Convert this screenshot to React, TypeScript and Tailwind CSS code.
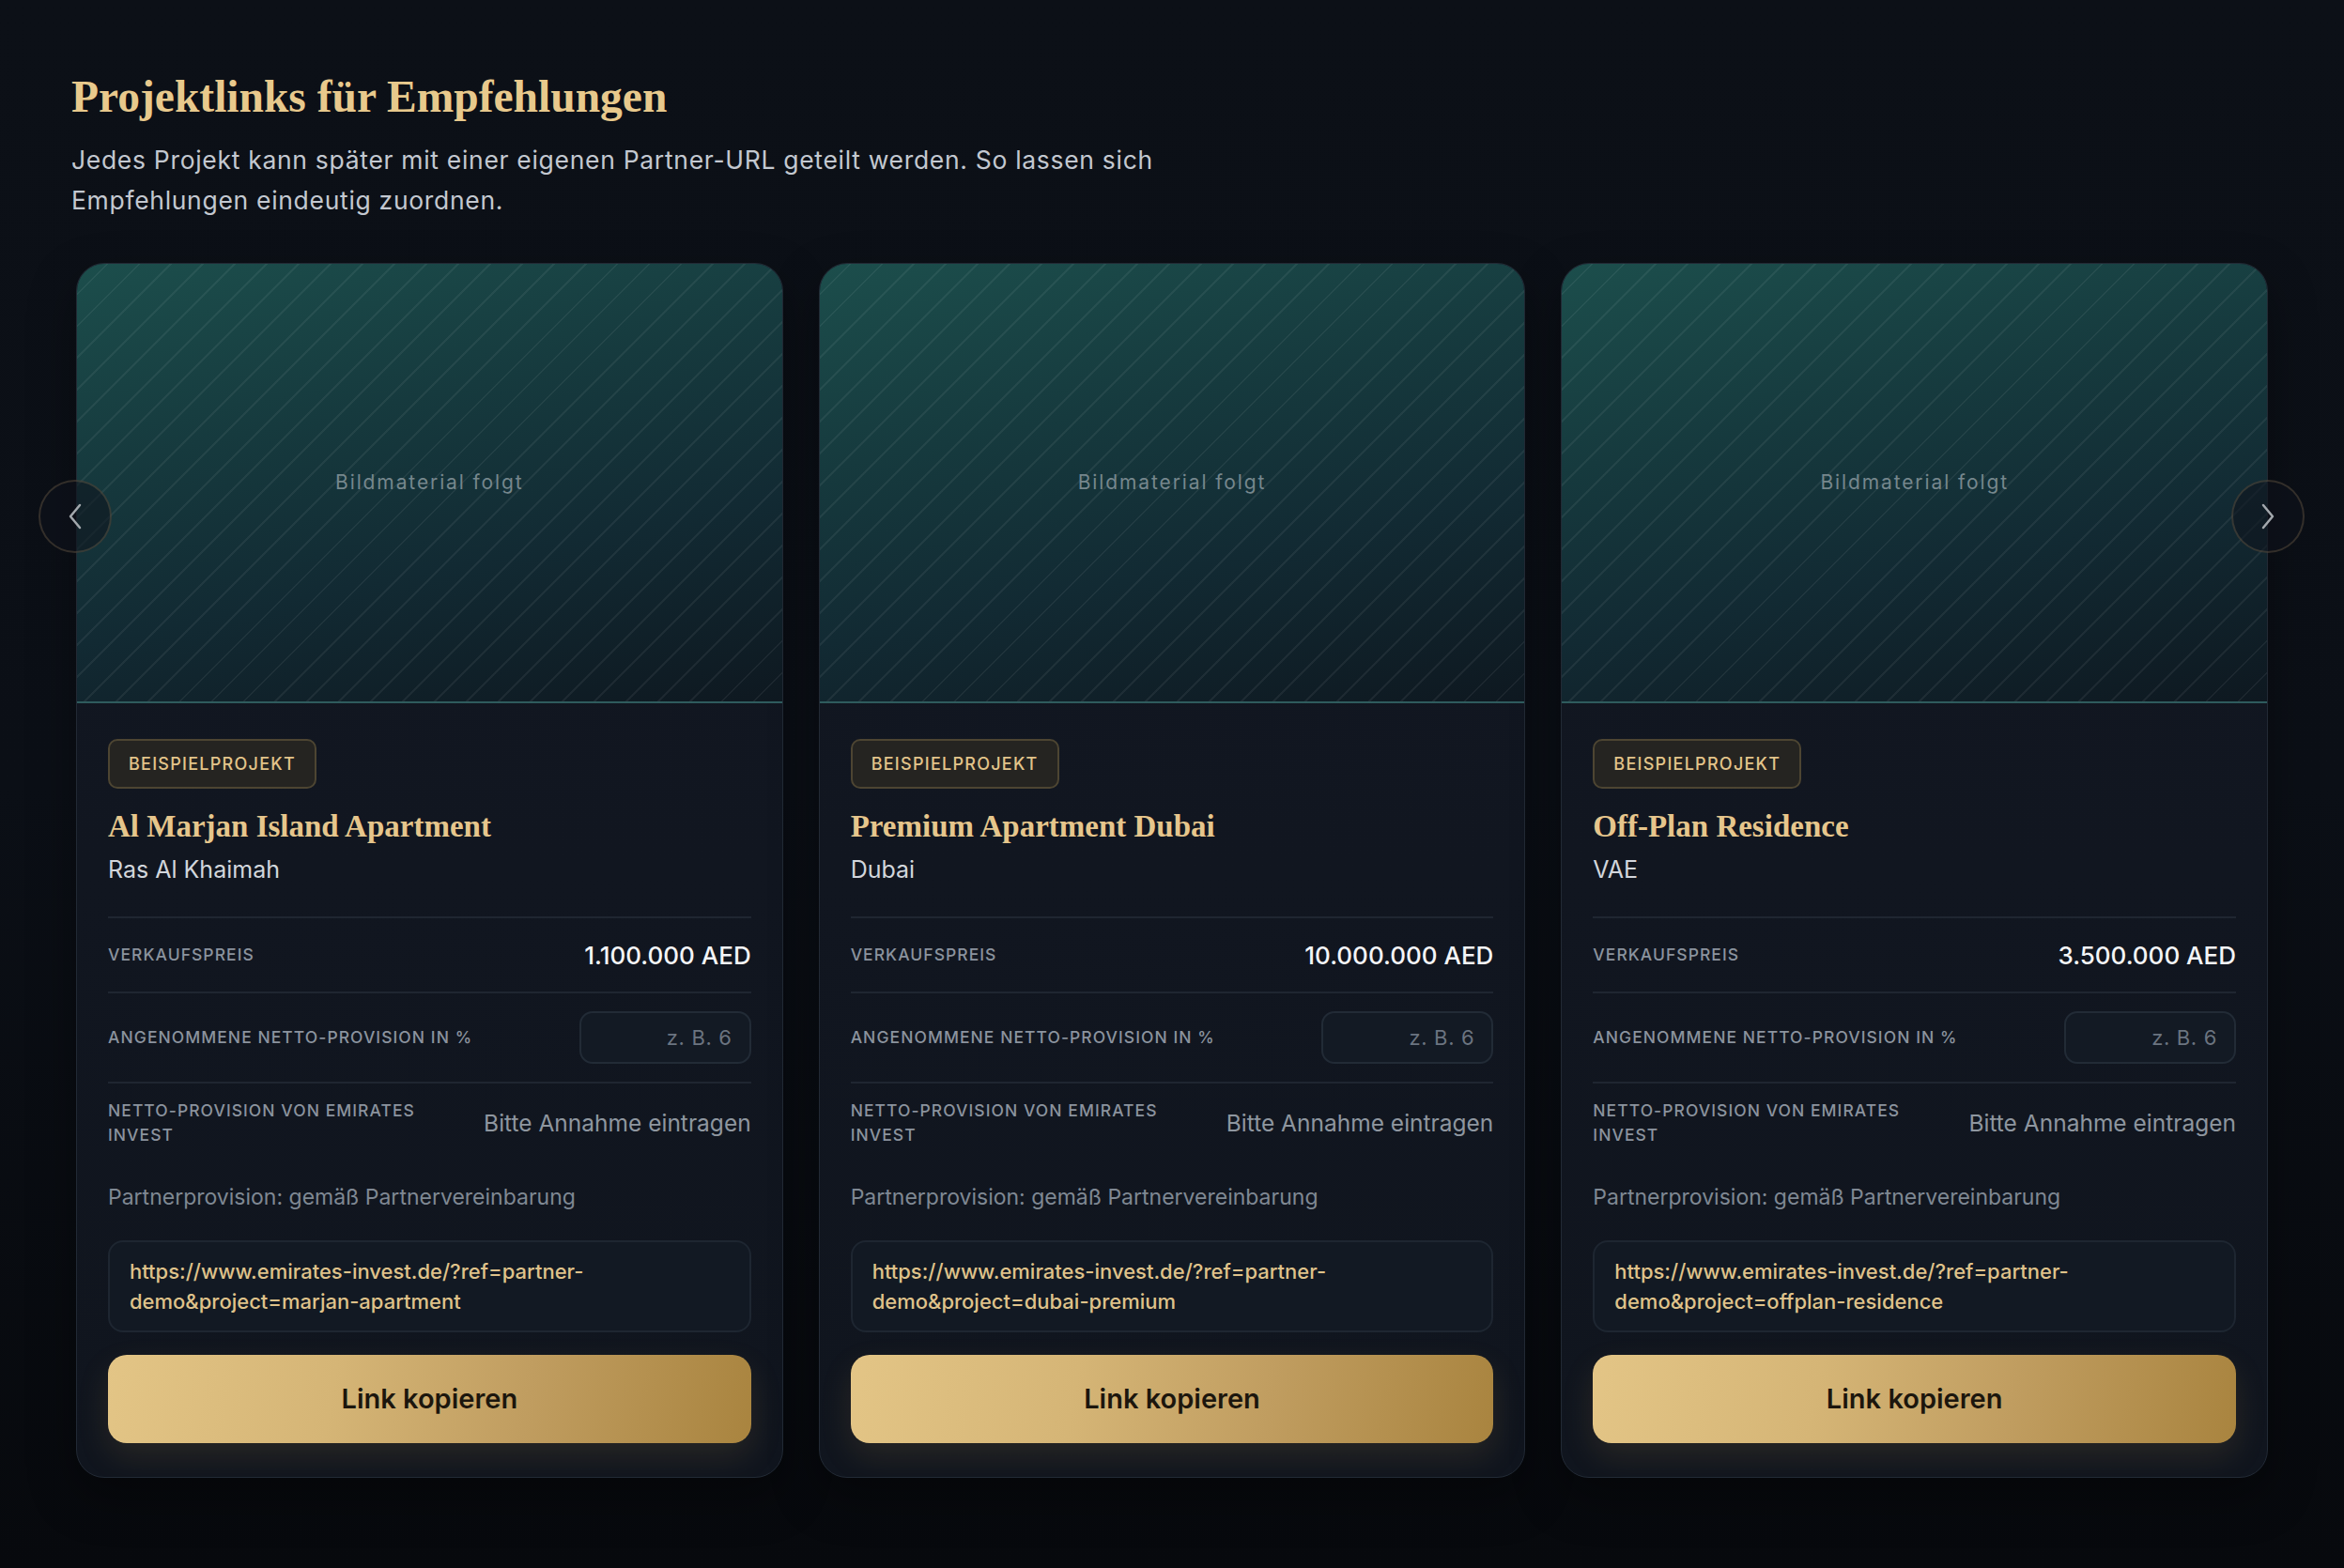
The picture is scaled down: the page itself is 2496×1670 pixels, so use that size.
import React from "react";

type Project = {
  title: string;
  location: string;
  price: string;
  url: string;
};

const projects: Project[] = [
  {
    title: "Al Marjan Island Apartment",
    location: "Ras Al Khaimah",
    price: "1.100.000 AED",
    url: "https://www.emirates-invest.de/?ref=partner-demo&project=marjan-apartment",
  },
  {
    title: "Premium Apartment Dubai",
    location: "Dubai",
    price: "10.000.000 AED",
    url: "https://www.emirates-invest.de/?ref=partner-demo&project=dubai-premium",
  },
  {
    title: "Off-Plan Residence",
    location: "VAE",
    price: "3.500.000 AED",
    url: "https://www.emirates-invest.de/?ref=partner-demo&project=offplan-residence",
  },
];

const sans = "font-['Inter','Noto_Sans',sans-serif]";
const serif = "font-['Liberation_Serif','DejaVu_Serif',serif]";

function Card({ p }: { p: Project }) {
  return (
    <div className="rounded-[30px] border border-[#222a35] bg-[linear-gradient(180deg,#121722_0%,#10151e_100%)] overflow-hidden shadow-[0_20px_50px_rgba(0,0,0,0.35)]">
      <div className="relative h-[468px] border-b-2 border-[#2f5b5d] bg-[linear-gradient(168deg,#1c4e4c_0%,#163a3e_35%,#122a33_65%,#0e1820_100%)]">
        <div className="absolute inset-0 bg-[image:repeating-linear-gradient(135deg,rgba(255,255,255,0)_0px,rgba(255,255,255,0)_22px,rgba(255,255,255,0.06)_22px,rgba(255,255,255,0.06)_24px)]" />
        <div className="absolute inset-0 flex items-center justify-center">
          <span className={`${sans} text-[21px] tracking-[0.09em] text-[#76878d]`}>Bildmaterial folgt</span>
        </div>
      </div>
      <div className="px-[33px] pt-[38px] pb-[36px]">
        <div className="flex">
          <div className={`${sans} h-[53px] flex items-center px-[20px] rounded-[10px] border-2 border-[#4d4532] bg-[#252421] text-[18px] font-medium tracking-[0.07em] text-[#e3c48a]`}>
            BEISPIELPROJEKT
          </div>
        </div>
        <div className={`${serif} mt-[20px] text-[33px] leading-[40px] font-bold text-[#e6c68c]`}>{p.title}</div>
        <div className={`${sans} mt-[8px] text-[25px] leading-[36px] text-[#d2d6dc]`}>{p.location}</div>
        <div className="mt-[32px]">
          <div className="h-[80px] border-t-2 border-[#1f2631] flex items-center justify-between">
            <span className={`${sans} text-[17.5px] tracking-[0.06em] font-medium text-[#8b939e]`}>VERKAUFSPREIS</span>
            <span className={`${sans} text-[26px] font-medium text-[#f4f5f7]`}>{p.price}</span>
          </div>
          <div className="h-[96px] border-t-2 border-[#1f2631] flex items-center justify-between gap-6">
            <span className={`${sans} text-[17.5px] tracking-[0.06em] font-medium text-[#8b939e]`}>ANGENOMMENE NETTO-PROVISION IN %</span>
            <div className={`${sans} w-[183px] h-[56px] shrink-0 rounded-[14px] border-2 border-[#222b36] bg-[#131a24] flex items-center justify-end pr-[18px] text-[22px] tracking-[0.03em] text-[#6b7480]`}>
              z. B. 6
            </div>
          </div>
          <div className="border-t-2 border-[#1f2631] pt-[16px] pb-[18px] flex items-center justify-between gap-6">
            <span className={`${sans} flex-1 text-[17.5px] leading-[26px] tracking-[0.06em] font-medium text-[#8b939e]`}>NETTO-PROVISION VON EMIRATES INVEST</span>
            <span className={`${sans} shrink-0 whitespace-nowrap text-[24.5px] text-[#8e969f]`}>Bitte Annahme eintragen</span>
          </div>
        </div>
        <div className={`${sans} mt-[17px] text-[23px] leading-[36px] text-[#7f8893]`}>Partnerprovision: gemäß Partnervereinbarung</div>
        <div className={`${sans} mt-[28px] rounded-[16px] border-2 border-[#1e2631] bg-[#121923] px-[21px] py-[15px] text-[22px] leading-[32px] font-medium text-[#dfc28a] break-words`}>
          {p.url}
        </div>
        <button className={`${sans} mt-[24px] w-full h-[94px] rounded-[20px] bg-[linear-gradient(100deg,#e3c586_0%,#d5b576_35%,#c09d60_65%,#a9843f_100%)] shadow-[0_14px_34px_rgba(190,150,80,0.14)] text-[29px] font-semibold text-[#1c160d]`}>
          Link kopieren
        </button>
      </div>
    </div>
  );
}

function Chevron({ dir }: { dir: "left" | "right" }) {
  return (
    <svg width="16" height="28" viewBox="0 0 16 28" fill="none">
      {dir === "left" ? (
        <polyline points="13,2 3,14 13,26" stroke="#a3a8ad" strokeWidth="2.5" strokeLinecap="round" strokeLinejoin="round" />
      ) : (
        <polyline points="3,2 13,14 3,26" stroke="#a3a8ad" strokeWidth="2.5" strokeLinecap="round" strokeLinejoin="round" />
      )}
    </svg>
  );
}

export default function App() {
  return (
    <div className="min-h-[1670px] w-full bg-[linear-gradient(180deg,#0c1017_0%,#0b0f16_50%,#07090d_100%)] px-[76px] pt-[76px]">
      <h1 className={`${serif} text-[47.5px] leading-[54px] font-semibold text-[#e8c98c]`}>Projektlinks für Empfehlungen</h1>
      <p className={`${sans} mt-[19px] max-w-[1240px] text-[26.5px] leading-[43px] tracking-[0.026em] text-[#c3c8d0]`}>
        Jedes Projekt kann später mit einer eigenen Partner-URL geteilt werden. So lassen sich Empfehlungen eindeutig zuordnen.
      </p>
      <div className="relative mt-[45px]">
        <div className="grid grid-cols-3 gap-[38px] px-[5px]">
          {projects.map((p) => (
            <Card key={p.title} p={p} />
          ))}
        </div>
        <button className="absolute left-[-35px] top-[231px] w-[78px] h-[78px] rounded-full border-2 border-[rgba(190,160,110,0.22)] bg-[rgba(14,19,27,0.55)] flex items-center justify-center">
          <Chevron dir="left" />
        </button>
        <button className="absolute right-[-34px] top-[231px] w-[78px] h-[78px] rounded-full border-2 border-[rgba(190,160,110,0.22)] bg-[rgba(14,19,27,0.55)] flex items-center justify-center">
          <Chevron dir="right" />
        </button>
      </div>
    </div>
  );
}
